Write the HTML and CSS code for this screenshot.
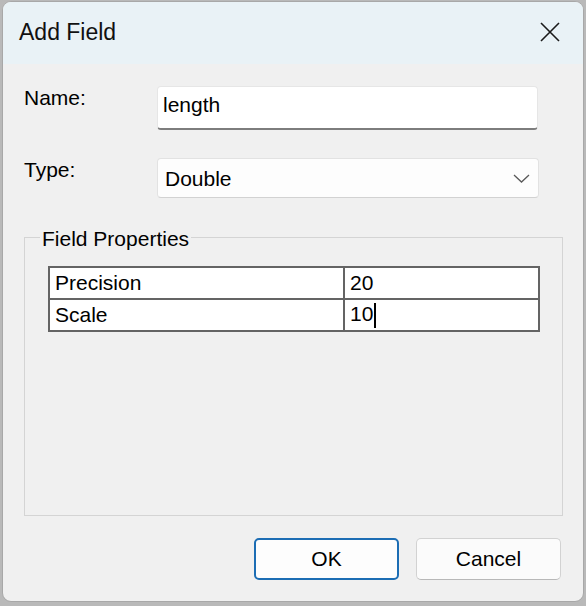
FILE: index.html
```html
<!DOCTYPE html>
<html lang="en">
<head>
<meta charset="utf-8">
<title>Add Field</title>
<link rel="stylesheet" href="styles.css">
</head>
<body>
<div class="dialog">
  <div class="titlebar">
    <span class="title">Add Field</span>
    <span class="close" aria-label="Close">
      <svg width="20" height="20" viewBox="0 0 20 20"><path d="M1 1 L19 19 M19 1 L1 19" stroke="#1a1a1a" stroke-width="1.6" fill="none"/></svg>
    </span>
  </div>
  <div class="content">
    <div class="form-row">
      <label class="label">Name:</label>
      <div class="textbox">length</div>
    </div>
    <div class="form-row">
      <label class="label">Type:</label>
      <div class="combo">
        <span class="combo-text">Double</span>
        <svg class="chevron" width="17" height="9" viewBox="0 0 17 9"><path d="M1 1 L8.5 8 L16 1" stroke="#5a5a5a" stroke-width="1.3" fill="none"/></svg>
      </div>
    </div>
    <fieldset class="group">
      <legend class="group-title">Field Properties</legend>
      <table class="props">
        <tr><td class="prop-name">Precision</td><td class="prop-value">20</td></tr>
        <tr><td class="prop-name">Scale</td><td class="prop-value">10<span class="caret"></span></td></tr>
      </table>
    </fieldset>
    <div class="buttons">
      <button class="btn btn-primary">OK</button>
      <button class="btn">Cancel</button>
    </div>
  </div>
</div>
</body>
</html>
```

FILE: styles.css
```css
html, body {
  margin: 0;
  padding: 0;
}
body {
  background: #b9b9b9;
  width: 586px;
  height: 606px;
  overflow: hidden;
  font-family: "Liberation Sans", Arial, sans-serif;
  font-size: 21px;
  color: #000;
}
.dialog {
  margin: 1px 2px 0;
  width: 582px;
  height: 601px;
  box-sizing: border-box;
  border: 1px solid #a8a8a8;
  border-radius: 9px;
  overflow: hidden;
  background: #f0f0f0;
  display: flex;
  flex-direction: column;
}
.titlebar {
  height: 62px;
  flex: none;
  background: #e9f2f6;
  display: flex;
  align-items: center;
  justify-content: space-between;
  padding: 0 23px 3px 16px;
  box-sizing: border-box;
}
.title {
  font-size: 23px;
  line-height: 28px;
  color: #111;
}
.close {
  display: flex;
  width: 20px;
  height: 20px;
}
.content {
  flex: 1;
  display: flex;
  flex-direction: column;
  padding: 22px 20px 21px 21px;
  box-sizing: border-box;
}
.form-row {
  display: grid;
  grid-template-columns: 133px 382px;
  align-items: start;
  margin-bottom: 28px;
}
.form-row:nth-child(2) {
  margin-bottom: 0;
}
.label {
  line-height: 24px;
}
.textbox {
  width: 381px;
  height: 44px;
  box-sizing: border-box;
  background: #fff;
  border: 1px solid #e6e6e6;
  border-bottom: 2px solid #7d7d7d;
  border-radius: 4px;
  padding: 6px 5px 0;
  line-height: 24px;
}
.combo {
  height: 40px;
  box-sizing: border-box;
  background: #fdfdfd;
  border: 1px solid #e2e2e2;
  border-bottom-color: #d2d2d2;
  border-radius: 4px;
  padding: 0 8px 0 7px;
  display: flex;
  align-items: center;
  justify-content: space-between;
}
.combo-text {
  line-height: 24px;
  margin-top: 2px;
}
.chevron {
  display: block;
}
.group {
  flex: 1;
  margin: 25px 0 0;
  padding: 0 15px;
  border: 1px solid #d4d4d4;
  min-inline-size: 0;
}
.group-title {
  padding: 4px 2px 0;
  line-height: 24px;
}
.props {
  margin: 15px 0 0 8px;
  width: 492px;
  border-collapse: collapse;
  border: 2px solid #646464;
  background: #fff;
}
.props td {
  border: 2px solid #646464;
  height: 32px;
  padding: 0 4px 0 5px;
  line-height: 24px;
  box-sizing: border-box;
}
.prop-name {
  width: 295px;
}
.prop-value {
  padding-left: 4px;
}
.caret {
  display: inline-block;
  width: 2px;
  height: 25px;
  background: #000;
  vertical-align: -7px;
  margin-left: 1px;
}
.buttons {
  display: flex;
  justify-content: flex-end;
  gap: 17px;
  margin-top: 22px;
  padding-right: 2px;
}
.btn {
  width: 145px;
  height: 42px;
  box-sizing: border-box;
  font-family: "Liberation Sans", Arial, sans-serif;
  font-size: 21px;
  color: #000;
  background: #fbfbfb;
  border: 1px solid #d2d2d2;
  border-bottom-color: #b8b8b8;
  border-radius: 5px;
  padding: 0;
}
.btn-primary {
  background: #fdfdfd;
  border: 2px solid #1c6db4;
}
```
